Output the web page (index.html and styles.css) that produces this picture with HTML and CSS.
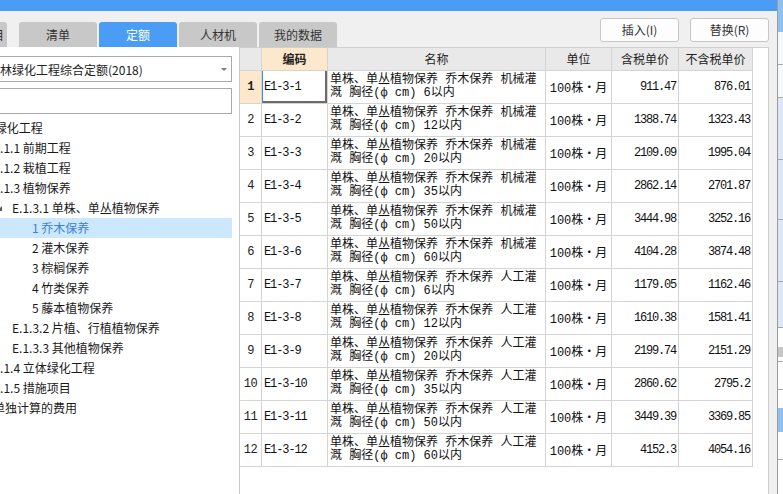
FILE: index.html
```html
<!DOCTYPE html>
<html lang="zh-CN">
<head>
<meta charset="utf-8">
<title>定额</title>
<link rel="stylesheet" href="styles.css">
</head>
<body>
<div class="window">
  <div class="titlebar"></div>
  <div class="toolbar">
    <div class="tabs">
      <div class="tab cut">项目</div>
      <div class="tab">清单</div>
      <div class="tab active">定额</div>
      <div class="tab">人材机</div>
      <div class="tab">我的数据</div>
    </div>
    <div class="buttons">
      <div class="btn">插入(I)</div>
      <div class="btn">替换(R)</div>
    </div>
  </div>
  <div class="content">
    <div class="left">
      <div class="left-inner">
        <div class="select"><span>园林绿化工程综合定额(2018)</span><i class="caret"></i></div>
        <div class="search"></div>
        <div class="tree">
          <div class="node l1">E.1 绿化工程</div>
          <div class="node l2">E.1.1 前期工程</div>
          <div class="node l2">E.1.2 栽植工程</div>
          <div class="node l2">E.1.3 植物保养</div>
          <div class="node l3"><i class="exp"></i>E.1.3.1 单株、单丛植物保养</div>
          <div class="node l4 selected">1 乔木保养</div>
          <div class="node l4">2 灌木保养</div>
          <div class="node l4">3 棕榈保养</div>
          <div class="node l4">4 竹类保养</div>
          <div class="node l4">5 藤本植物保养</div>
          <div class="node l3 leaf">E.1.3.2 片植、行植植物保养</div>
          <div class="node l3 leaf">E.1.3.3 其他植物保养</div>
          <div class="node l2">E.1.4 立体绿化工程</div>
          <div class="node l2">E.1.5 措施项目</div>
          <div class="node l2">单独计算的费用</div>
        </div>
      </div>
    </div>
    <div class="grid">
      <div class="row head">
        <div></div>
        <div class="hcode">编码</div>
        <div>名称</div>
        <div>单位</div>
        <div>含税单价</div>
        <div>不含税单价</div>
      </div>
      <div class="row">
        <div class="idx current">1</div>
        <div class="code sel">E1-3-1</div>
        <div class="desc">单株、单丛植物保养 乔木保养 机械灌溉 胸径(ф cm) 6以内</div>
        <div class="unit">100株・月</div>
        <div class="num">911.47</div>
        <div class="num">876.01</div>
      </div>
      <div class="row">
        <div class="idx">2</div>
        <div class="code">E1-3-2</div>
        <div class="desc">单株、单丛植物保养 乔木保养 机械灌溉 胸径(ф cm) 12以内</div>
        <div class="unit">100株・月</div>
        <div class="num">1388.74</div>
        <div class="num">1323.43</div>
      </div>
      <div class="row">
        <div class="idx">3</div>
        <div class="code">E1-3-3</div>
        <div class="desc">单株、单丛植物保养 乔木保养 机械灌溉 胸径(ф cm) 20以内</div>
        <div class="unit">100株・月</div>
        <div class="num">2109.09</div>
        <div class="num">1995.04</div>
      </div>
      <div class="row">
        <div class="idx">4</div>
        <div class="code">E1-3-4</div>
        <div class="desc">单株、单丛植物保养 乔木保养 机械灌溉 胸径(ф cm) 35以内</div>
        <div class="unit">100株・月</div>
        <div class="num">2862.14</div>
        <div class="num">2701.87</div>
      </div>
      <div class="row">
        <div class="idx">5</div>
        <div class="code">E1-3-5</div>
        <div class="desc">单株、单丛植物保养 乔木保养 机械灌溉 胸径(ф cm) 50以内</div>
        <div class="unit">100株・月</div>
        <div class="num">3444.98</div>
        <div class="num">3252.16</div>
      </div>
      <div class="row">
        <div class="idx">6</div>
        <div class="code">E1-3-6</div>
        <div class="desc">单株、单丛植物保养 乔木保养 机械灌溉 胸径(ф cm) 60以内</div>
        <div class="unit">100株・月</div>
        <div class="num">4104.28</div>
        <div class="num">3874.48</div>
      </div>
      <div class="row">
        <div class="idx">7</div>
        <div class="code">E1-3-7</div>
        <div class="desc">单株、单丛植物保养 乔木保养 人工灌溉 胸径(ф cm) 6以内</div>
        <div class="unit">100株・月</div>
        <div class="num">1179.05</div>
        <div class="num">1162.46</div>
      </div>
      <div class="row">
        <div class="idx">8</div>
        <div class="code">E1-3-8</div>
        <div class="desc">单株、单丛植物保养 乔木保养 人工灌溉 胸径(ф cm) 12以内</div>
        <div class="unit">100株・月</div>
        <div class="num">1610.38</div>
        <div class="num">1581.41</div>
      </div>
      <div class="row">
        <div class="idx">9</div>
        <div class="code">E1-3-9</div>
        <div class="desc">单株、单丛植物保养 乔木保养 人工灌溉 胸径(ф cm) 20以内</div>
        <div class="unit">100株・月</div>
        <div class="num">2199.74</div>
        <div class="num">2151.29</div>
      </div>
      <div class="row">
        <div class="idx">10</div>
        <div class="code">E1-3-10</div>
        <div class="desc">单株、单丛植物保养 乔木保养 人工灌溉 胸径(ф cm) 35以内</div>
        <div class="unit">100株・月</div>
        <div class="num">2860.62</div>
        <div class="num">2795.2</div>
      </div>
      <div class="row">
        <div class="idx">11</div>
        <div class="code">E1-3-11</div>
        <div class="desc">单株、单丛植物保养 乔木保养 人工灌溉 胸径(ф cm) 50以内</div>
        <div class="unit">100株・月</div>
        <div class="num">3449.39</div>
        <div class="num">3369.85</div>
      </div>
      <div class="row">
        <div class="idx">12</div>
        <div class="code">E1-3-12</div>
        <div class="desc">单株、单丛植物保养 乔木保养 人工灌溉 胸径(ф cm) 60以内</div>
        <div class="unit">100株・月</div>
        <div class="num">4152.3</div>
        <div class="num">4054.16</div>
      </div>
    </div>
  </div>
</div>
<div class="edge">
  <div class="seg s-top"></div>
  <div class="seg s-light line"></div>
  <div class="seg s-light line"></div>
  <div class="seg s-blue62 line"></div>
  <div class="seg s-blue60 line"></div>
  <div class="seg s-blue62 line"></div>
  <div class="seg s-blue46 line"></div>
  <div class="seg s-white19"></div>
  <div class="seg s-gray"></div>
  <div class="seg s-white5 line"></div>
  <div class="seg s-white28 line"></div>
  <div class="seg s-white18"></div>
  <div class="seg s-hl"></div>
  <div class="seg s-white28 line"></div>
</div>
</body>
</html>
```
FILE: styles.css
```css
* { box-sizing: border-box; }
html, body { margin: 0; padding: 0; }
body {
  width: 783px;
  height: 494px;
  overflow: hidden;
  background: #f0f0f0;
  display: flex;
  font-family: "Noto Sans CJK SC", sans-serif;
  font-size: 12px;
  color: #222;
}

.window {
  width: 778px;
  flex: none;
  border-right: 1px solid #9c9c9c;
  display: flex;
  flex-direction: column;
}
.titlebar { height: 11px; flex: none; background: #4b9cf5; }

.toolbar {
  height: 36px;
  flex: none;
  display: flex;
  justify-content: space-between;
  padding-right: 8px;
}
.tabs { display: flex; align-items: flex-end; gap: 2px; }
.tab {
  width: 78px;
  height: 25px;
  background: #c8c8c8;
  border-radius: 3px 3px 0 0;
  display: flex;
  align-items: center;
  justify-content: center;
  color: #333;
  line-height: 1;
}
.tab.active { background: #4b9cf5; color: #fff; }
.tab.cut {
  width: 40px;
  margin-left: -33px;
  margin-right: 10px;
  justify-content: flex-end;
  padding-right: 3px;
}
.buttons { display: flex; gap: 11px; padding-top: 7px; }
.btn {
  width: 79px;
  height: 24px;
  border: 1px solid #c6c6c6;
  border-radius: 3px;
  background: #fdfdfd;
  display: flex;
  align-items: center;
  justify-content: center;
  color: #333;
  line-height: 1;
}

.content { flex: 1; min-height: 0; display: flex; padding-right: 8px; }

.left {
  width: 240px;
  flex: none;
  border-right: 1px solid #c9c9c9;
  background: #fff;
  overflow: hidden;
}
.left-inner { margin-left: -47px; width: 279px; padding-top: 9px; }
.select {
  height: 26px;
  border: 1px solid #a9a9a9;
  display: flex;
  align-items: center;
  padding-left: 34px;
  padding-right: 4px;
  white-space: nowrap;
  color: #222;
}
.caret {
  margin-left: auto;
  width: 0;
  height: 0;
  border-left: 3px solid transparent;
  border-right: 3px solid transparent;
  border-top: 3px solid #7a7a7a;
}
.search { height: 26px; margin-top: 6px; border: 1px solid #a9a9a9; }
.tree { margin-top: 4px; }
.node {
  height: 20px;
  line-height: 20px;
  white-space: nowrap;
  color: #1a1a1a;
  display: flex;
  align-items: center;
}
.l1 { padding-left: 22px; }
.l2 { padding-left: 40px; }
.l3 { padding-left: 44px; }
.l3.leaf { padding-left: 59px; }
.l4 { padding-left: 79px; }
.exp {
  width: 0;
  height: 0;
  border-left: 5px solid transparent;
  border-bottom: 5px solid #5a5a5a;
  margin-right: 10px;
}
.selected { background: #cce8ff; color: #3d7fd6; }

.grid {
  width: 529px;
  flex: none;
  background: #fff;
  border-top: 1px solid #cfcfcf;
  border-right: 1px solid #cfcfcf;
}
.row {
  display: grid;
  grid-template-columns: 22px 66px 218px 66px 67px 74px;
  height: 33px;
}
.row > div {
  border-right: 1px solid #d4d4d4;
  border-bottom: 1px solid #d4d4d4;
  display: flex;
  align-items: center;
  overflow: hidden;
}
.row.head { height: 23px; }
.row.head > div {
  background: #e9e9e9;
  justify-content: center;
  color: #222;
  line-height: 1;
}
.row.head > .hcode { background: #fde8cb; font-weight: 700; }

.idx {
  justify-content: center;
  font-family: "Liberation Mono", monospace;
  letter-spacing: -0.5px;
  color: #222;
}
.idx.current { background: #fde8cb; font-weight: 700; }
.code {
  font-family: "Liberation Mono", monospace;
  letter-spacing: -1.1px;
  padding-left: 2px;
  color: #111;
}
.sel { box-shadow: inset 1px 0 0 #3a8ee6, inset -2px -2px 0 #6b6b6b; }
.desc {
  font-family: "Liberation Mono", "Noto Sans CJK SC", monospace;
  line-height: 13px;
  padding-left: 2px;
  color: #111;
}
.unit {
  justify-content: center;
  font-family: "Liberation Mono", "Noto Sans CJK SC", monospace;
  color: #111;
}
.num {
  justify-content: flex-end;
  font-family: "Liberation Mono", monospace;
  letter-spacing: -1.2px;
  padding-right: 2px;
  color: #111;
}

.edge {
  flex: 1;
  display: flex;
  flex-direction: column;
  background: #fff;
}
.seg { flex: none; }
.line { border-bottom: 1px solid #a8a8a8; }
.s-top { height: 32px; background: #8fc1ef; }
.s-light { height: 33px; background: #f7f8fb; }
.s-blue62 { height: 62px; background: #dde7f7; }
.s-blue60 { height: 60px; background: #dde7f7; }
.s-blue46 { height: 46px; background: #dde7f7; }
.s-white19 { height: 19px; }
.s-gray { height: 10px; background: #c6c6c6; }
.s-white5 { height: 5px; }
.s-white28 { height: 28px; }
.s-white18 { height: 18px; }
.s-hl { height: 24px; background: #8ec0f0; }
```
